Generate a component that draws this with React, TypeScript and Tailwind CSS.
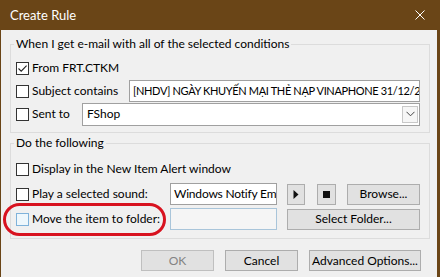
import { ReactNode } from "react";

const Check = ({ checked, focus }: { checked?: boolean; focus?: boolean }) => (
  <span
    className={
      focus
        ? "flex h-[13px] w-[13px] shrink-0 items-center justify-center border border-[#7fb2da] bg-[#eef7fc]"
        : "flex h-[13px] w-[13px] shrink-0 items-center justify-center border border-[#333333] bg-white"
    }
  >
    {checked ? (
      <svg width="11" height="11" viewBox="0 0 11 11">
        <path d="M1.5 5.5 L4.2 8.2 L9.6 2.6" fill="none" stroke="#222" strokeWidth="1.1" />
      </svg>
    ) : null}
  </span>
);

const Box = ({ label, checked, focus }: { label: string; checked?: boolean; focus?: boolean }) => (
  <div className="flex items-center gap-[3px] whitespace-nowrap">
    <Check checked={checked} focus={focus} />
    <span>{label}</span>
  </div>
);

const Btn = ({ children, className }: { children: ReactNode; className: string }) => (
  <div
    className={
      "flex h-[21px] shrink-0 items-center justify-center border border-[#adadad] bg-[#e1e1e1] " + className
    }
  >
    {children}
  </div>
);

export default function App() {
  return (
    <div className="flex h-[277px] w-[440px] flex-col bg-[#6a4517] font-[Lato,sans-serif] text-[12px] leading-[16px] text-black">
      {/* title bar */}
      <div className="flex h-[30px] shrink-0 items-center justify-between pl-[10px] pr-[15px] text-white">
        <span className="text-[13px]">Create Rule</span>
        <svg width="10" height="10" viewBox="0 0 10 10">
          <path d="M0.5 0.5 L9.5 9.5 M9.5 0.5 L0.5 9.5" stroke="#fff" strokeWidth="1" />
        </svg>
      </div>

      <div className="relative ml-[1px] flex w-[436px] flex-1 flex-col bg-[#f0f0f0]">
        <fieldset className="ml-[9px] mt-[6px] w-[420px] border border-[#dcdcdc] pb-[7px] pl-[5px] pr-[9px]">
          <legend className="-ml-[2px] px-[2px] leading-[16px]">
            When I get e-mail with all of the selected conditions
          </legend>
          <div className="flex flex-col gap-[1px] pt-[5px]">
            <div className="flex h-[22px] items-center">
              <Box label="From FRT.CTKM" checked />
            </div>
            <div className="flex h-[22px] items-center">
              <Box label="Subject contains" />
              <div className="ml-auto flex h-[22px] w-[291px] items-center overflow-hidden whitespace-nowrap border border-[#a0a0a0] bg-white px-[3px] text-[11px] tracking-[-0.35px]">
                [NHDV] NGÀY KHUYẾN MẠI THẺ NẠP VINAPHONE 31/12/2
              </div>
            </div>
            <div className="flex h-[22px] items-center">
              <Box label="Sent to" />
              <div className="ml-auto flex h-[23px] w-[338px] items-center justify-between border border-[#a0a0a0] bg-white pl-[4px] pr-[1px]">
                <span>FShop</span>
                <div className="flex h-[17px] w-[16px] items-center justify-center border border-[#c8c8c8] bg-[#f6f6f6]">
                  <svg width="9" height="6" viewBox="0 0 9 6">
                    <path d="M0.5 0.8 L4.5 4.8 L8.5 0.8" fill="none" stroke="#444" strokeWidth="1" />
                  </svg>
                </div>
              </div>
            </div>
          </div>
        </fieldset>

        <fieldset className="ml-[9px] mt-[2px] w-[420px] border border-[#dcdcdc] pb-[8px] pl-[5px] pr-[9px]">
          <legend className="-ml-[2px] px-[2px] leading-[16px]">Do the following</legend>
          <div className="flex flex-col gap-[3px] pt-[7px]">
            <div className="flex h-[22px] items-center">
              <Box label="Display in the New Item Alert window" />
            </div>
            <div className="flex h-[22px] items-center">
              <div className="w-[154px] shrink-0">
                <Box label="Play a selected sound:" />
              </div>
              <div className="flex h-[22px] w-[107px] shrink-0 items-center overflow-hidden whitespace-nowrap border border-[#a0a0a0] bg-white px-[3px] tracking-[-0.2px]">
                Windows Notify Em
              </div>
              <Btn className="ml-[10px] w-[18px]">
                <svg width="6" height="9" viewBox="0 0 6 9">
                  <path d="M0.5 0 L5.5 4.5 L0.5 9 Z" fill="#111" />
                </svg>
              </Btn>
              <Btn className="ml-[12px] w-[19px]">
                <span className="h-[7px] w-[7px] bg-[#111]" />
              </Btn>
              <Btn className="ml-[11px] w-[73px]">Browse...</Btn>
            </div>
            <div className="flex h-[22px] items-center">
              <div className="w-[154px] shrink-0">
                <Box label="Move the item to folder:" focus />
              </div>
              <div className="h-[22px] w-[107px] shrink-0 border border-[#a9c5da] bg-[#f5f5f5]" />
              <Btn className="ml-[10px] w-[133px]">Select Folder...</Btn>
            </div>
          </div>
        </fieldset>

        <div className="mt-[11px] flex justify-end gap-[11px] pr-[16px]">
          <Btn className="w-[73px] border-[#bfbfbf] bg-[#cccccc] text-[#838383]">OK</Btn>
          <Btn className="w-[73px]">Cancel</Btn>
          <Btn className="w-[112px]">Advanced Options...</Btn>
        </div>

        {/* red annotation */}
        <div className="absolute left-[2px] top-[173px] h-[33px] w-[163px] rounded-full border-[3px] border-[#d8121f]" />
      </div>
    </div>
  );
}
